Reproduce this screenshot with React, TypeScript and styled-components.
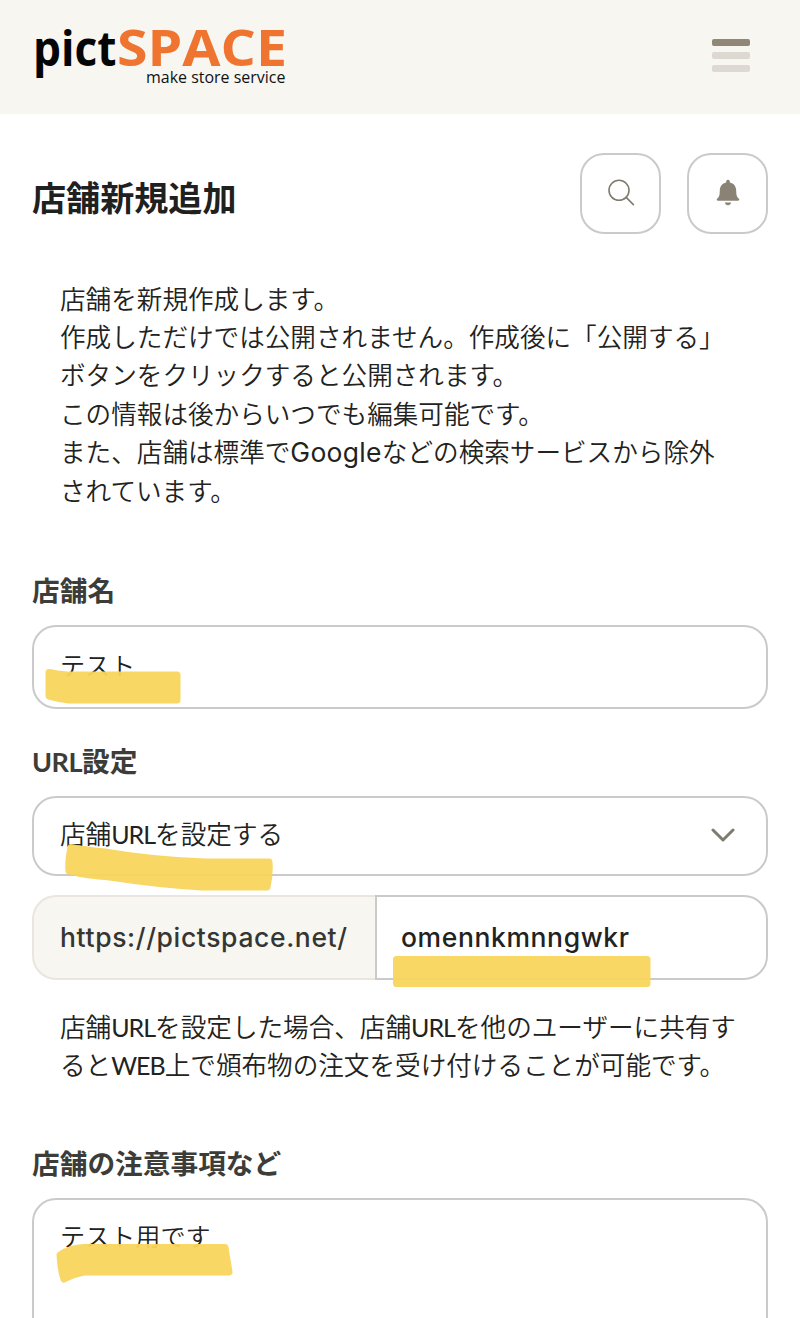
import React from "react";
import styled, { createGlobalStyle, css } from "styled-components";

const GlobalStyle = createGlobalStyle`
  *, *::before, *::after { box-sizing: border-box; }
  html, body { margin: 0; padding: 0; background: #fff; }
  body { overflow: hidden; }
`;

const Page = styled.div`
  width: 800px;
  height: 1318px;
  overflow: hidden;
  background: #fff;
  color: #222220;
  font-family: "Noto Sans CJK JP", sans-serif;
  font-size: 25.6px;
  font-weight: 350;
  line-height: 38.4px;
`;

const Header = styled.header`
  display: flex;
  align-items: flex-start;
  justify-content: space-between;
  height: 113.5px;
  padding: 4px 50px 0 32px;
  background: #f7f6f1;
`;

const LogoArt = styled.svg`
  display: block;
  width: 260px;
  height: 92px;
  overflow: visible;
`;

const MenuButton = styled.button`
  display: flex;
  flex-direction: column;
  gap: 5.3px;
  margin: 34.5px 0 0;
  padding: 0;
  border: 0;
  background: none;
`;

const MenuBar = styled.span<{ $active?: boolean }>`
  width: 38px;
  height: 7.8px;
  border-radius: 2px;
  background: ${(p) => (p.$active ? "#908776" : "#ded8d3")};
`;

const Main = styled.main`
  display: flex;
  flex-direction: column;
  padding: 39px 32px 0;
`;

const TitleRow = styled.div`
  display: flex;
  align-items: center;
  gap: 26px;
  height: 81px;
`;

const Title = styled.h1`
  flex: 1;
  margin: 6px 0 0;
  font-size: 34.1px;
  line-height: 50px;
  font-weight: 700;
  color: #20201e;
`;

const IconButton = styled.button`
  display: flex;
  align-items: center;
  justify-content: center;
  width: 81px;
  height: 81px;
  padding: 0 0 1px;
  border: 2px solid #cacaca;
  border-radius: 24px;
  background: #fff;
`;

const Copy = styled.p<{ $top: number }>`
  margin: ${(p) => p.$top}px 0 0;
  padding: 0 0 0 28px;
  white-space: nowrap;
`;

const Latin = styled.span<{ $spacing?: number; $weight?: number }>`
  font-family: Inter, "Noto Sans CJK JP", sans-serif;
  font-weight: ${(p) => p.$weight ?? 500};
  font-size: 26.5px;
  letter-spacing: ${(p) => p.$spacing ?? 0}px;
  line-height: 1;
`;

const Caps = styled.span<{ $spacing?: number; $size?: number; $weight?: number }>`
  font-family: Lato, "Noto Sans CJK JP", sans-serif;
  font-weight: ${(p) => p.$weight ?? 400};
  font-size: ${(p) => p.$size ?? 25}px;
  letter-spacing: ${(p) => p.$spacing ?? -1}px;
  line-height: 1;
`;

const Field = styled.section<{ $top: number }>`
  display: flex;
  flex-direction: column;
  gap: 14px;
  margin-top: ${(p) => p.$top}px;
`;

const Label = styled.h2`
  margin: -2px 0 2px;
  font-size: 27.7px;
  line-height: 40px;
  font-weight: 700;
  color: #3c3c39;
`;

const outline = css`
  border: 2px solid #cacaca;
  border-radius: 24px;
  background: #fff;
`;

const Box = styled.div<{ $height: number; $top?: boolean }>`
  ${outline}
  position: relative;
  display: flex;
  align-items: ${(p) => (p.$top ? "flex-start" : "center")};
  justify-content: space-between;
  height: ${(p) => p.$height}px;
  padding: ${(p) => (p.$top ? "16px 31px 0 26px" : "0 31px 5px 26px")};
`;

const BoxText = styled.span`
  font-size: 25.1px;
`;

const UrlGroup = styled.div`
  position: relative;
  display: flex;
  height: 85px;
  margin-top: 5px;
`;

const UrlPrefix = styled.div`
  display: flex;
  align-items: center;
  width: 343px;
  padding: 0 0 1px 26px;
  border: 2px solid #ebe5df;
  border-right: 0;
  border-radius: 24px 0 0 24px;
  background: #f7f6f1;
  color: #353533;
`;

const UrlValue = styled.div`
  ${outline}
  flex: 1;
  display: flex;
  align-items: center;
  padding: 0 0 1px 24px;
  border-radius: 0 24px 24px 0;
`;

const Marker = styled.svg<{ $x: number; $y: number }>`
  position: absolute;
  left: ${(p) => p.$x}px;
  top: ${(p) => p.$y}px;
  overflow: visible;
  fill: #f9d55d;
  stroke: #f9d55d;
  stroke-width: 7;
  stroke-linejoin: round;
  opacity: 0.95;
  pointer-events: none;
`;

const Chevron = styled.svg`
  margin-top: 4px;
`;

function Logo() {
  return (
    <LogoArt viewBox="32 4 260 92" role="img" aria-label="pictSPACE make store service">
      <g fontFamily="Open Sans, sans-serif">
        <text x="33" y="66" fontSize="49" fontWeight="700" fill="#050505" textLength="83.5" lengthAdjust="spacingAndGlyphs">pict</text>
        <text x="117" y="66" fontSize="50" fontWeight="700" fill="#ee742f" textLength="170" lengthAdjust="spacingAndGlyphs">SPACE</text>
        <text x="146" y="83" fontSize="15.5" fontWeight="500" fill="#111" textLength="139.5" lengthAdjust="spacingAndGlyphs">make store service</text>
      </g>
    </LogoArt>
  );
}

function SearchIcon() {
  return (
    <svg width="28" height="28" viewBox="0 0 28 28" fill="none" stroke="#807b6f" strokeWidth="1.6" strokeLinecap="round">
      <circle cx="12" cy="11.3" r="10" />
      <path d="M19.2 18.4 26.4 25.6" />
    </svg>
  );
}

function BellIcon() {
  return (
    <svg width="24" height="28" viewBox="0 0 24 28" fill="#8a8375">
      <path d="M12 .8c1.1 0 1.8.8 1.8 1.8v.8c4 .9 6.4 4 6.4 8 0 4.5.7 6.6 2.6 8.2.5.5.6 1 .4 1.5-.2.4-.6.7-1.2.7H2c-.6 0-1-.3-1.2-.7-.2-.5-.1-1 .4-1.5 1.900-1.6 2.600-3.7 2.600-8.2 0-4 2.4-7.100 6.400-8v-.8c0-1 .7-1.800 1.800-1.800Z" />
      <path d="M8.8 23.5h6.4c-.5 1.8-1.5 2.7-3.2 2.7s-2.7-.9-3.2-2.7Z" />
    </svg>
  );
}

export default function App() {
  return (
    <>
      <GlobalStyle />
      <Page>
        <Header>
          <Logo />
          <MenuButton aria-label="メニュー">
            <MenuBar $active />
            <MenuBar />
            <MenuBar />
          </MenuButton>
        </Header>
        <Main>
          <TitleRow>
            <Title>店舗新規追加</Title>
            <IconButton aria-label="検索"><SearchIcon /></IconButton>
            <IconButton aria-label="通知"><BellIcon /></IconButton>
          </TitleRow>
          <Copy $top={45}>
            店舗を新規作成します。<br />
            作成しただけでは公開されません。作成後に「公開する」<br />
            ボタンをクリックすると公開されます。<br />
            この情報は後からいつでも編集可能です。<br />
            また、店舗は標準で<Latin $spacing={0.3} $weight={400}>Google</Latin>などの検索サービスから除外<br />
            されています。
          </Copy>
          <Field $top={62}>
            <Label>店舗名</Label>
            <Box $height={84}>
              <BoxText>テスト</BoxText>
              <Marker $x={11} $y={42} width="138" height="36">
                <path d="M4 3.5Q12 5.5 22 6H132V31H24Q15 30 4 27Z" />
              </Marker>
            </Box>
          </Field>
          <Field $top={33}>
            <Label><Caps $size={27} $weight={700} $spacing={-0.5}>URL</Caps>設定</Label>
            <Box $height={80}>
              <span>店舗<Caps>URL</Caps>を設定する</span>
              <Chevron width="24" height="14" viewBox="0 0 24 14" fill="none" stroke="#807b6f" strokeWidth="3" strokeLinecap="round" strokeLinejoin="round">
                <path d="M2 2 12 12 22 2" />
              </Chevron>
              <Marker $x={31} $y={46} width="210" height="50">
                <path d="M6 3.5Q18 6 40 8Q85 16 140 18H204Q205 30 202 43H137Q90 40 45 33Q22 32 4 27Q3 18 6 3.5Z" />
              </Marker>
            </Box>
            <UrlGroup>
              <UrlPrefix><Latin $spacing={0.63}>https://pictspace.net/</Latin></UrlPrefix>
              <UrlValue><Latin $spacing={0.6}>omennkmnngwkr</Latin></UrlValue>
              <Marker $x={360} $y={60} width="260" height="34">
                <path d="M4.5 4.5H255V28.5H4.5Z" />
              </Marker>
            </UrlGroup>
          </Field>
          <Copy $top={26.8}>
            店舗<Caps>URL</Caps>を設定した場合、店舗<Caps>URL</Caps>を他のユーザーに共有す<br />
            ると<Caps>WEB</Caps>上で頒布物の注文を受け付けることが可能です。
          </Copy>
          <Field $top={60.3}>
            <Label>店舗の注意事項など</Label>
            <Box $height={160} $top>
              <BoxText>テスト用です</BoxText>
              <Marker $x={22} $y={42} width="180" height="42">
                <path d="M4 13Q14 6 28 5.5H169L173 30H28Q17 32 8 37Q5 29 4 13Z" />
              </Marker>
            </Box>
          </Field>
        </Main>
      </Page>
    </>
  );
}
